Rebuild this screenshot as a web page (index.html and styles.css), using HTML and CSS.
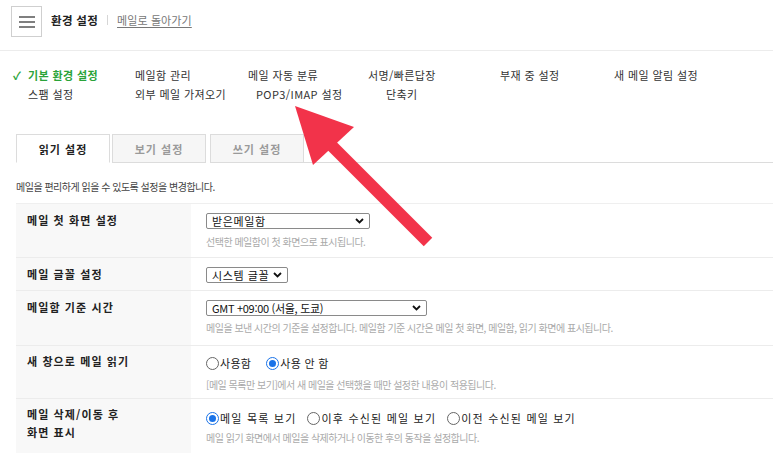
FILE: index.html
```html
<!DOCTYPE html>
<html lang="ko">
<head>
<meta charset="utf-8">
<title>환경 설정</title>
<link rel="stylesheet" href="styles.css">
</head>
<body>
<div class="page">
  <header class="top">
    <button class="menu-btn" aria-label="메뉴">
      <svg width="16" height="12" viewBox="0 0 16 12"><path d="M0 1h16M0 6h16M0 11h16" stroke="#555" stroke-width="1.6"/></svg>
    </button>
    <h1 class="title">환경 설정</h1>
    <span class="sep"></span>
    <a class="back" href="#">메일로 돌아가기</a>
  </header>

  <nav class="snb">
    <ul class="snb-row row1">
      <li class="on"><span class="check">✓</span>기본 환경 설정</li>
      <li>메일함 관리</li>
      <li>메일 자동 분류</li>
      <li>서명/빠른답장</li>
      <li>부재 중 설정</li>
      <li>새 메일 알림 설정</li>
    </ul>
    <ul class="snb-row row2">
      <li>스팸 설정</li>
      <li>외부 메일 가져오기</li>
      <li>POP3/IMAP 설정</li>
      <li>단축키</li>
    </ul>
  </nav>

  <div class="tabs">
    <div class="tab active">읽기 설정</div>
    <div class="tab">보기 설정</div>
    <div class="tab">쓰기 설정</div>
    <div class="tab-fill"></div>
  </div>

  <p class="desc">메일을 편리하게 읽을 수 있도록 설정을 변경합니다.</p>

  <div class="table">
    <div class="row r1">
      <div class="label">메일 첫 화면 설정</div>
      <div class="value">
        <div class="select s-inbox"><span>받은메일함</span><svg class="chev" width="9" height="6" viewBox="0 0 9 6"><path d="M1 1l3.5 3.5L8 1" fill="none" stroke="#111" stroke-width="1.8"/></svg></div>
        <p class="hint">선택한 메일함이 첫 화면으로 표시됩니다.</p>
      </div>
    </div>
    <div class="row r2">
      <div class="label">메일 글꼴 설정</div>
      <div class="value">
        <div class="select s-font"><span>시스템 글꼴</span><svg class="chev" width="9" height="6" viewBox="0 0 9 6"><path d="M1 1l3.5 3.5L8 1" fill="none" stroke="#111" stroke-width="1.8"/></svg></div>
      </div>
    </div>
    <div class="row r3">
      <div class="label">메일함 기준 시간</div>
      <div class="value">
        <div class="select s-time"><span class="gmt">GMT +09:00 (서울, 도쿄)</span><svg class="chev" width="9" height="6" viewBox="0 0 9 6"><path d="M1 1l3.5 3.5L8 1" fill="none" stroke="#111" stroke-width="1.8"/></svg></div>
        <p class="hint">메일을 보낸 시간의 기준을 설정합니다. 메일함 기준 시간은 메일 첫 화면, 메일함, 읽기 화면에 표시됩니다.</p>
      </div>
    </div>
    <div class="row r4">
      <div class="label">새 창으로 메일 읽기</div>
      <div class="value">
        <div class="radios">
          <label class="radio"><span class="dot"></span>사용함</label>
          <label class="radio"><span class="dot checked"></span>사용 안 함</label>
        </div>
        <p class="hint">[메일 목록만 보기]에서 새 메일을 선택했을 때만 설정한 내용이 적용됩니다.</p>
      </div>
    </div>
    <div class="row r5">
      <div class="label">메일 삭제/이동 후<br>화면 표시</div>
      <div class="value">
        <div class="radios wide">
          <label class="radio"><span class="dot checked"></span>메일 목록 보기</label>
          <label class="radio"><span class="dot"></span>이후 수신된 메일 보기</label>
          <label class="radio"><span class="dot"></span>이전 수신된 메일 보기</label>
        </div>
        <p class="hint">메일 읽기 화면에서 메일을 삭제하거나 이동한 후의 동작을 설정합니다.</p>
      </div>
    </div>
  </div>

  <svg class="arrow" width="773" height="453" viewBox="0 0 773 453" aria-hidden="true">
    <line x1="326" y1="140" x2="428" y2="242" stroke="#f2334a" stroke-width="12"/>
    <polygon points="295,106 354,127 313,165" fill="#f2334a"/>
  </svg>
</div>
</body>
</html>
```

FILE: styles.css
```css
* { box-sizing: border-box; }
html, body { margin: 0; padding: 0; }
body {
  width: 773px;
  height: 453px;
  overflow: hidden;
  background: #fff;
  font-family: "Noto Sans CJK KR", "Noto Sans", sans-serif;
  color: #333;
}
.page { position: relative; width: 773px; height: 453px; overflow: hidden; }

.top {
  height: 51px;
  display: flex;
  align-items: flex-start;
  padding: 6px 0 0 11px;
  border-bottom: 1px solid #ececec;
}
.menu-btn {
  width: 31px;
  height: 31px;
  margin: 0;
  padding: 0;
  border: 1px solid #cfcfcf;
  background: #fff;
  display: flex;
  align-items: center;
  justify-content: center;
}
.title {
  margin: 0 0 0 9px;
  font-size: 11.5px;
  line-height: 28px;
  font-weight: 700;
  color: #222;
  letter-spacing: 0.3px;
}
.sep {
  width: 1px;
  height: 10px;
  background: #d6d6d6;
  margin: 9px 9px 0 9px;
}
.back {
  font-size: 11px;
  line-height: 28px;
  color: #777;
  text-decoration: underline;
  text-underline-offset: 2px;
  letter-spacing: 0.1px;
}

.snb { padding: 15px 0 0 13px; }
.snb-row {
  list-style: none;
  margin: 0;
  padding: 0;
  display: grid;
  grid-template-columns: 122px 113px 120px 132px 114px 1fr;
  font-size: 11px;
  line-height: 19px;
  color: #333;
  letter-spacing: 0.4px;
}
.snb-row li { white-space: nowrap; }
.snb-row .on { color: #2aa339; font-weight: 700; }
.check { display: inline-block; width: 15px; font-weight: 700; }
.row2 li:nth-child(1) { padding-left: 15px; }
.row2 li:nth-child(3) { padding-left: 8px; }
.row2 li:nth-child(4) { padding-left: 18px; }

.tabs {
  display: flex;
  margin-top: 30px;
  padding-left: 16px;
  height: 29px;
}
.tab {
  width: 94px;
  height: 29px;
  margin-right: 2px;
  border: 1px solid #dcdcdc;
  background: #f6f6f6;
  color: #9a9a9a;
  font-size: 11px;
  font-weight: 700;
  letter-spacing: 1px;
  display: flex;
  align-items: center;
  justify-content: center;
}
.tab:nth-child(2) { margin-right: 4px; }
.tab.active {
  background: #fff;
  color: #222;
  border-bottom-color: #fff;
}
.tab-fill {
  flex: 1;
  border-bottom: 1px solid #dcdcdc;
  margin-left: -2px;
}

.desc {
  margin: 17px 0 0 16px;
  font-size: 10px;
  line-height: 14px;
  color: #444;
  letter-spacing: -0.5px;
}

.table { margin: 9px 0 0 16px; border-top: 1px solid #efefef; }
.row {
  display: flex;
  border-bottom: 1px solid #ececec;
}
.r1 { height: 54px; }
.r2 { height: 33px; }
.r3 { height: 55px; }
.r4 { height: 53px; }
.r5 { height: 60px; }
.label {
  width: 175px;
  flex: none;
  background: #f8f8f8;
  padding: 7px 0 0 11px;
  font-size: 11px;
  font-weight: 700;
  line-height: 18px;
  color: #222;
  letter-spacing: 1.1px;
}
.r4 .label { padding-top: 6px; }
.r5 .label { padding-top: 6px; }
.value { padding: 9px 0 0 15px; flex: 1; min-width: 0; }
.r4 .value { padding-top: 8px; }
.select {
  display: flex;
  align-items: center;
  justify-content: space-between;
  height: 16px;
  border: 1px solid #8a8a8a;
  border-radius: 2px;
  padding: 0 5px 0 5px;
  font-size: 11px;
  color: #111;
  letter-spacing: 0.6px;
  background: #fff;
}
.s-inbox { width: 164px; }
.s-font { width: 82px; }
.s-time { width: 221px; }
.gmt { letter-spacing: -0.3px; }
.chev { flex: none; }
.hint {
  margin: 6px 0 0;
  font-size: 10px;
  line-height: 14px;
  color: #aaa;
  letter-spacing: -0.5px;
  white-space: nowrap;
}
.r3 .hint { margin-top: 5px; }

.radios {
  display: flex;
  align-items: center;
  height: 18px;
  font-size: 11px;
  color: #222;
  white-space: nowrap;
}
.radio { display: flex; align-items: center; margin-right: 15px; letter-spacing: 0.3px; }
.wide .radio { margin-right: 11px; letter-spacing: 1.2px; }
.r5 .value { padding-top: 10px; }
.r5 .hint { margin-top: 4px; }
.dot {
  width: 13px;
  height: 13px;
  border: 1px solid #666;
  border-radius: 50%;
  margin-right: 1px;
  flex: none;
  position: relative;
  background: #fff;
}
.dot.checked { border-color: #1a73e8; }
.dot.checked::after {
  content: "";
  position: absolute;
  left: 2px;
  top: 2px;
  width: 7px;
  height: 7px;
  border-radius: 50%;
  background: #1a73e8;
}

.arrow { position: absolute; left: 0; top: 0; pointer-events: none; }
```
